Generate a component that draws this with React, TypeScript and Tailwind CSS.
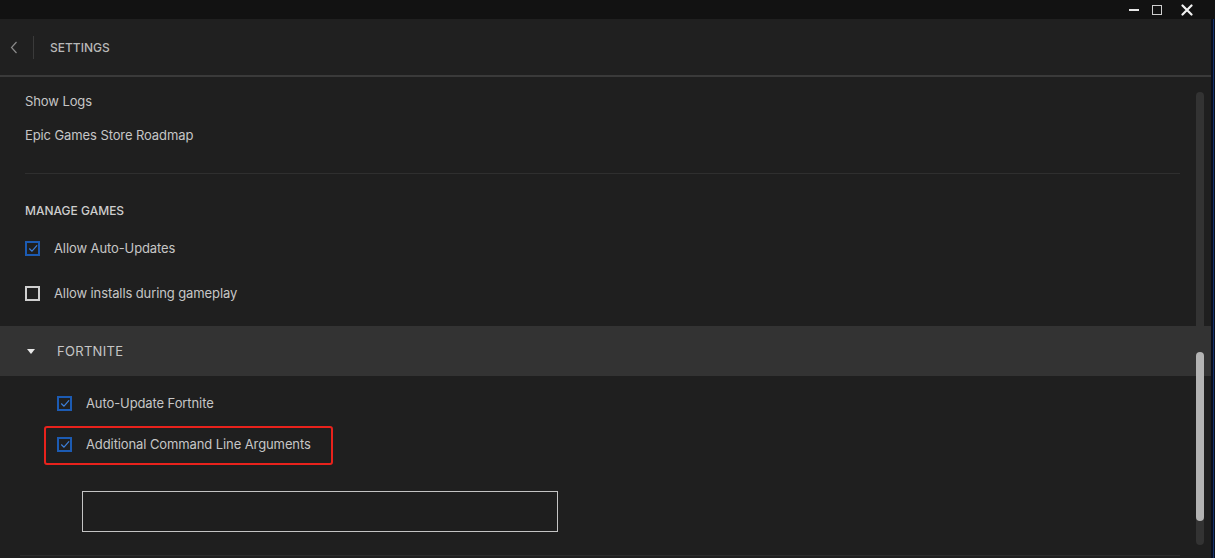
import React from "react";

const font = { fontFamily: "Inter, 'Open Sans', 'Liberation Sans', sans-serif" };

function Check({ checked }: { checked: boolean }) {
  if (checked) {
    return (
      <div className="w-[15px] h-[15px] border-2 border-[#1c5bb3] flex items-center justify-center shrink-0">
        <svg width="10" height="9" viewBox="0 0 10 9" fill="none">
          <path d="M1.5 4.8 L4 7.2 L8.8 1.6" stroke="#3d7fd9" strokeWidth="1.2" strokeLinecap="round" strokeLinejoin="round" />
        </svg>
      </div>
    );
  }
  return <div className="w-[15px] h-[15px] border-2 border-[#cfcfcf] shrink-0" />;
}

function Row({ checked, label }: { checked: boolean; label: string }) {
  return (
    <div className="h-[20px] flex items-center gap-[14px]">
      <Check checked={checked} />
      <span className="pt-[2px] text-[13px] text-[#c6c6c6] tracking-[-0.1px]">{label}</span>
    </div>
  );
}

export default function App() {
  return (
    <div className="w-[1215px] h-[558px] bg-[#1f1f1f] flex flex-col overflow-hidden" style={font}>
      {/* title bar */}
      <div className="h-[19px] bg-[#121212] flex items-center justify-end shrink-0">
        <div className="w-[10px] h-[2px] bg-[#e6e6e6] mr-[13px]" />
        <div className="w-[10px] h-[10px] border-[1.5px] border-[#cfcfcf] mr-[19px]" />
        <svg width="12" height="12" viewBox="0 0 12 12" className="mr-[22px]">
          <path d="M1.5 1.5 L10.5 10.5 M10.5 1.5 L1.5 10.5" stroke="#f2f2f2" strokeWidth="2.2" strokeLinecap="round" />
        </svg>
      </div>
      <div className="flex-1 flex min-h-0">
        <div className="flex-1 flex flex-col min-w-0">
          {/* header */}
          <div className="h-[56px] bg-[#202020] flex items-center shrink-0">
            <svg width="8" height="13" viewBox="0 0 8 13" className="ml-[10px]">
              <path d="M6.5 1 L1.5 6.5 L6.5 12" stroke="#8a8a8a" strokeWidth="1.2" fill="none" />
            </svg>
            <div className="w-px h-[23px] bg-[#3a3a3a] ml-[15px]" />
            <span className="ml-[16px] pt-[1px] text-[12px] font-medium text-[#b8b8b8]">SETTINGS</span>
          </div>
          <div className="h-[2px] bg-[#3a3a3a] shrink-0" />
          {/* content */}
          <div className="relative flex-1 flex flex-col">
            <div className="pl-[25px] pt-[14px] flex flex-col">
              <div className="h-[20px] pt-[2px] flex items-center text-[13px] text-[#c6c6c6] tracking-[-0.1px]">Show Logs</div>
              <div className="mt-[14px] h-[20px] pt-[2px] flex items-center text-[13px] text-[#c6c6c6] tracking-[-0.1px]">Epic Games Store Roadmap</div>
              <div className="mt-[28px] h-px w-[1155px] bg-[#2f2f2f]" />
              <div className="mt-[26px] h-[20px] pt-[2px] flex items-center text-[12px] font-medium text-[#cdcdcd]">MANAGE GAMES</div>
              <div className="mt-[18px]">
                <Row checked label="Allow Auto-Updates" />
              </div>
              <div className="mt-[25px]">
                <Row checked={false} label="Allow installs during gameplay" />
              </div>
            </div>
            <div className="mt-[23px] h-[50px] bg-[#333333] flex items-center">
              <svg width="8" height="5" viewBox="0 0 8 5" className="ml-[27px]">
                <path d="M0 0 L8 0 L4 5 Z" fill="#e8e8e8" />
              </svg>
              <span className="ml-[22px] pt-[1px] text-[13px] text-[#c6c6c6] tracking-[0.3px]">FORTNITE</span>
            </div>
            <div className="pl-[57px] mt-[17px]">
              <Row checked label="Auto-Update Fortnite" />
            </div>
            <div className="ml-[44px] mt-[13px] w-[289px] h-[39px] border-2 border-[#e8221c] rounded-[3px] flex items-center pl-[11px] pb-[3px]">
              <Row checked label="Additional Command Line Arguments" />
            </div>
            <div className="ml-[82px] mt-[26px] w-[476px] h-[41px] border border-[#c4c4c4] bg-[#1e1e1e]" />
            <div className="ml-[20px] mt-[23px] w-[1160px] h-px bg-[#2c2c2c]" />
            {/* scrollbar */}
            <div className="absolute left-[1196px] top-[15px] w-[8px] h-[453px] rounded-full bg-[#333333]">
              <div className="absolute left-0 top-[260px] w-[8px] h-[169px] rounded-full bg-[#b3b3b3]" />
            </div>
          </div>
        </div>
        <div className="w-[4px] bg-[#0a0f1c] flex justify-center shrink-0">
          <div className="w-px bg-[#16336e]" />
        </div>
      </div>
    </div>
  );
}
